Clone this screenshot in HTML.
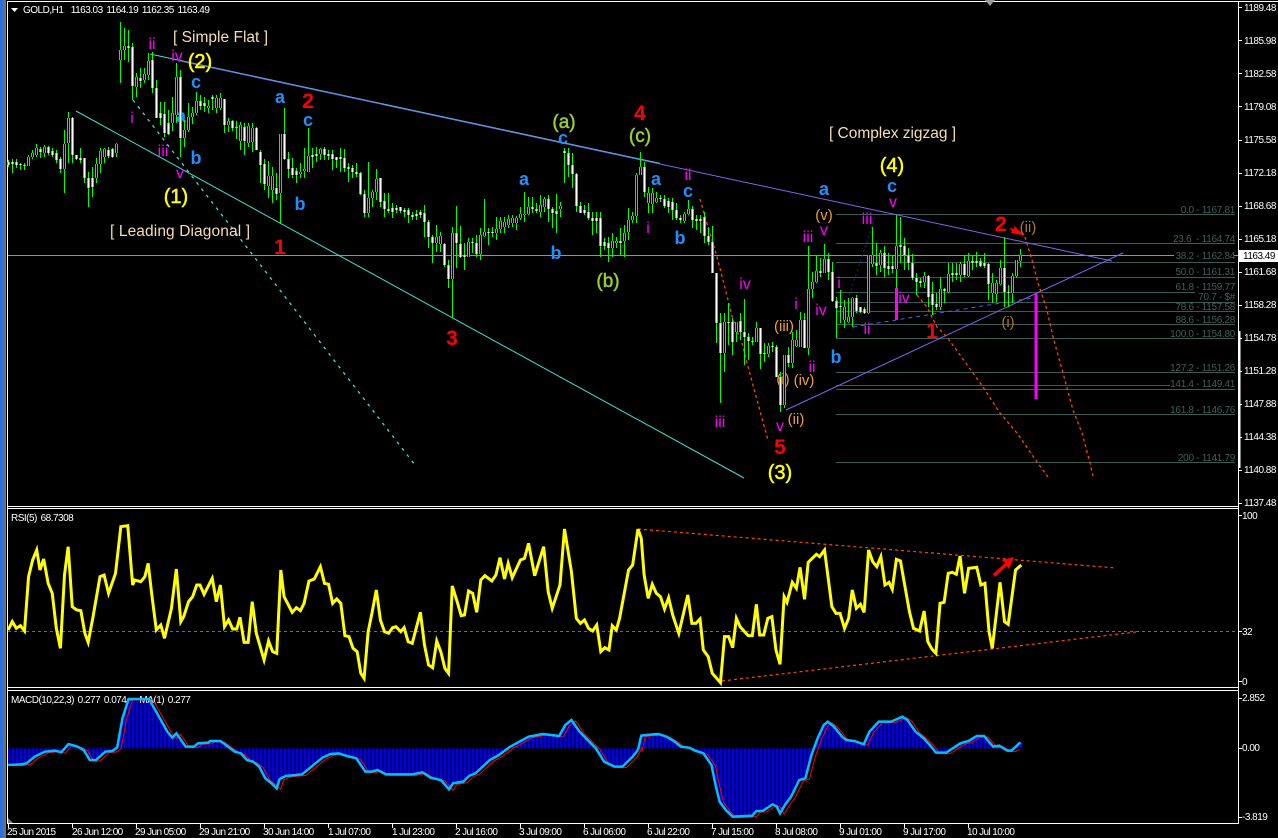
<!DOCTYPE html>
<html><head><meta charset="utf-8"><title>GOLD,H1</title>
<style>
html,body{margin:0;padding:0;background:#000;width:1278px;height:838px;overflow:hidden}
svg{position:absolute;left:0;top:0;display:block}
text{font-family:"Liberation Sans",sans-serif}
.t{fill:#fff;font-size:10px;letter-spacing:-.5px}
.h{fill:#fff;font-size:10px;letter-spacing:-.5px;word-spacing:1.4px}
.ta{fill:#fff;font-size:10px;letter-spacing:-.6px}
.f{fill:#3f5f5a;font-size:10px;text-anchor:end;letter-spacing:-.3px}
.y{fill:#ff0;stroke:#ff0;stroke-width:.5px;font-size:20px;text-anchor:middle}
.b{fill:#1e90ff;font-size:18px;font-weight:bold;text-anchor:middle}
.r{fill:#f00;font-size:21px;font-weight:bold;text-anchor:middle}
.g{fill:#9acd32;stroke:#9acd32;stroke-width:.5px;font-size:19px;text-anchor:middle}
.m{fill:#f0f;font-size:16px;text-anchor:middle}
.o{fill:#f0a030;font-size:15px;text-anchor:middle}
.d{fill:#a87830;font-size:15px;text-anchor:middle}
.w{fill:#f5deb3;font-size:15.5px}
.n{vector-effect:non-scaling-stroke;fill:none}
</style></head><body>
<svg width="1278" height="838" viewBox="0 0 1278 838" xmlns="http://www.w3.org/2000/svg">
<defs>
<pattern id="hp" patternUnits="userSpaceOnUse" x="8" y="0" width="4" height="10"><rect width="2" height="10" fill="#0000e0"/><rect x="2" width="1" height="10" fill="#00007a"/><rect x="3" width="1" height="10" fill="#000"/></pattern>
<clipPath id="hc">
<polygon transform="translate(0,505) scale(.40816,.33333)" points="20,730 20,780 50,778 65,775 85,755 110,740 135,737 150,742 168,717 190,725 205,735 220,765 235,765 258,740 275,738 287,728 300,640 315,582 365,582 385,625 410,680 422,698 432,685 455,725 475,725 485,715 510,713 515,708 540,708 575,740 590,745 605,765 620,770 635,785 650,820 665,835 678,850 685,822 700,813 740,808 770,778 790,758 810,747 830,745 850,753 873,760 895,800 910,800 925,795 945,808 1010,808 1035,802 1055,818 1080,825 1100,853 1110,835 1135,830 1150,812 1165,805 1200,765 1220,752 1250,725 1295,695 1330,687 1370,693 1385,660 1400,645 1420,680 1460,730 1480,770 1505,785 1525,785 1550,755 1563,725 1568,695 1568,730"/>
<polygon transform="translate(638,505) scale(.40816,.33333)" points="0,730 0,735 8,692 20,690 50,687 70,695 90,710 105,725 125,728 140,737 160,745 180,780 190,840 200,890 215,915 232,935 280,932 290,918 305,918 330,898 340,905 348,925 360,900 375,875 395,825 410,820 425,750 440,700 455,660 465,650 480,665 500,695 510,705 530,708 553,718 567,680 590,650 620,650 648,635 660,645 680,680 700,700 715,720 730,743 755,743 790,715 810,708 830,693 848,693 870,725 885,722 905,737 915,737 937,712 942,712 942,730"/>
</clipPath>
<path id="cw" class="n" d="M8.5 162V165M12.5 162V164M16.5 162V165M20.5 164V165M24.5 165V166M40.5 149V152M48.5 147V153M52.5 151V155M56.5 153V160M60.5 159V169M72.5 118V155M76.5 155V159M80.5 158V160M84.5 158V178M88.5 178V188M92.5 178V187M108.5 150V156M112.5 149V157M128.5 46V48M132.5 47V86M140.5 78V81M152.5 60V88M156.5 88V118M160.5 113V118M164.5 114V133M168.5 123V134M180.5 77V138M200.5 101V106M204.5 103V106M212.5 97V99M224.5 99V125M232.5 121V128M236.5 127V128M244.5 127V141M256.5 128V150M260.5 152V165M264.5 164V184M276.5 188V194M284.5 134V159M288.5 159V169M292.5 168V175M296.5 171V175M312.5 155V157M316.5 154V156M324.5 149V155M328.5 154V156M332.5 154V159M336.5 157V160M340.5 157V159M344.5 158V168M348.5 167V169M352.5 168V172M356.5 172V174M360.5 173V194M364.5 194V213M380.5 178V202M384.5 201V209M388.5 209V211M392.5 208V212M396.5 208V210M400.5 207V211M404.5 210V212M408.5 210V215M412.5 215V217M416.5 214V216M420.5 212V215M424.5 213V222M428.5 222V237M432.5 237V243M444.5 244V265M448.5 265V279M456.5 233V243M460.5 244V257M464.5 255V257M472.5 242V243M476.5 243V254M488.5 232V233M492.5 232V233M532.5 207V209M536.5 209V211M548.5 199V209M552.5 209V213M556.5 211V214M564.5 151V153M568.5 153V165M572.5 165V174M576.5 174V206M580.5 206V213M584.5 210V213M588.5 212V218M592.5 218V221M596.5 218V221M600.5 218V246M604.5 242V246M608.5 243V248M620.5 241V243M644.5 167V192M660.5 198V199M664.5 199V206M668.5 201V207M672.5 202V210M676.5 210V218M680.5 218V220M692.5 209V220M696.5 219V221M700.5 219V221M704.5 217V236M708.5 236V242M712.5 242V273M716.5 273V323M720.5 323V353M728.5 322V323M732.5 322V342M740.5 321V332M744.5 332V337M748.5 337V341M752.5 341V342M760.5 328V354M764.5 353V354M772.5 346V347M776.5 347V377M780.5 377V405M788.5 355V363M804.5 320V348M820.5 271V273M828.5 259V272M832.5 272V301M836.5 301V308M840.5 306V307M856.5 298V311M860.5 307V312M864.5 309V313M876.5 263V266M884.5 253V268M888.5 266V269M892.5 266V269M900.5 245V247M904.5 246V255M908.5 255V263M912.5 263V278M916.5 278V282M920.5 281V283M928.5 276V297M932.5 294V305M936.5 304V307M944.5 289V291M952.5 273V275M956.5 273V275M964.5 264V275M972.5 261V263M976.5 261V263M980.5 261V266M984.5 263V266M988.5 264V284M1004.5 268V292M1008.5 292V293"/>
<path id="cu" class="n" d="M28.5 157V166M32.5 153V157M36.5 148V155M44.5 147V153M64.5 144V169M68.5 118V143M96.5 164V178M100.5 151V164M104.5 149V157M116.5 144V153M120.5 50V60M124.5 46V50M136.5 77V87M144.5 74V80M148.5 61V75M172.5 113V123M176.5 77V115M184.5 130V138M188.5 117V130M192.5 113V117M196.5 101V113M208.5 106V108M216.5 98V108M220.5 98V108M228.5 121V125M240.5 125V141M248.5 126V143M252.5 128V142M268.5 176V186M272.5 176V190M280.5 134V193M300.5 172V174M304.5 169V171M308.5 156V172M320.5 149V154M368.5 198V213M372.5 192V198M376.5 179V192M436.5 237V243M440.5 236V244M452.5 233V279M468.5 242V257M480.5 235V254M484.5 232V236M496.5 229V233M500.5 221V229M504.5 222V227M508.5 219V225M512.5 218V223M516.5 218V223M520.5 214V218M524.5 214V215M528.5 207V214M540.5 205V212M544.5 199V207M560.5 206V209M612.5 241V248M616.5 241V243M624.5 233V241M628.5 220V232M632.5 216V220M636.5 175V216M640.5 167V175M648.5 193V203M652.5 193V204M656.5 198V202M684.5 214V221M688.5 209V214M724.5 322V353M736.5 322V332M756.5 328V342M768.5 346V354M784.5 355V405M792.5 340V363M796.5 340V346M800.5 320V347M808.5 289V348M812.5 282V289M816.5 271V282M824.5 259V273M844.5 307V320M848.5 317V322M852.5 298V317M868.5 255V313M872.5 255V264M880.5 253V265M896.5 246V269M924.5 276V282M940.5 289V307M948.5 274V292M960.5 264V275M968.5 261V276M992.5 283V293M996.5 283V294M1000.5 268V284M1012.5 276V293M1016.5 260V276M1020.5 255V261"/>
</defs>

<!-- frame -->
<rect x="0" y="0" width="3" height="838" fill="#2a6fe0"/><rect x="3" y="0" width="3" height="838" fill="#707070"/>
<g shape-rendering="crispEdges" stroke="#fff" fill="none">
<path d="M7 1.5H1278M7.5 1V823M1238.5 1V823M7 506.5H1238M7 508.5H1238M7 687.5H1238M7 690.5H1238M7 823.5H1239"/>
<path d="M1239.5 331V468" stroke-width="2"/>
<path d="M1238 7.5h4M1238 40.5h4M1238 73.5h4M1238 106.5h4M1238 140.5h4M1238 173.5h4M1238 206.5h4M1238 239.5h4M1238 272.5h4M1238 305.5h4M1238 338.5h4M1238 371.5h4M1238 404.5h4M1238 437.5h4M1238 470.5h4M1238 503.5h4M1238 515.5h4M1238 631.5h4M1238 681.5h4M1238 698.5h4M1238 748.5h4M1238 817.5h4"/>
<path d="M8.5 823v5M72.5 823v5M136.5 823v5M200.5 823v5M264.5 823v5M328.5 823v5M392.5 823v5M456.5 823v5M520.5 823v5M584.5 823v5M648.5 823v5M712.5 823v5M776.5 823v5M840.5 823v5M904.5 823v5M968.5 823v5"/>
</g>
<polygon points="985,0 995,0 990,6" fill="#9a9a9a"/>
<polygon points="8,818 8,823 13,823" fill="#808080"/>

<!-- current price and fib lines -->
<path d="M8 255.5H1174" stroke="#8c9494" shape-rendering="crispEdges"/>
<g stroke="#3a5c55" shape-rendering="crispEdges" fill="none">
<path d="M836 214.5H1235M836 243.5H1235M836 262.5H1235M836 277.5H1235M836 292.5H1195M836 302.5H1235M836 311.5H1235M836 324.5H1235M836 338.5H1235M836 372.5H1235M836 385.5H1170M836 389.5H1235M836 414.5H1235M836 462.5H1235"/>
</g>
<g>
<text class="f" x="1235" y="213">0.0 - 1167.81</text>
<text class="f" x="1235" y="242">23.6 &nbsp;- 1164.74</text>
<text class="f" x="1235" y="259">38.2 - 1162.84</text>
<text class="f" x="1235" y="275">50.0 - 1161.31</text>
<text class="f" x="1235" y="290">61.8 - 1159.77</text>
<text class="f" x="1235" y="300">70.7 - $#</text>
<text class="f" x="1235" y="310">78.6 - 1157.58</text>
<text class="f" x="1235" y="323">88.6 - 1156.28</text>
<text class="f" x="1235" y="337">100.0 - 1154.80</text>
<text class="f" x="1235" y="371">127.2 - 1151.26</text>
<text class="f" x="1235" y="387">141.4 - 1149.41</text>
<text class="f" x="1235" y="413">161.8 - 1146.76</text>
<text class="f" x="1235" y="461">200 - 1141.79</text>
</g>

<!-- trend lines -->
<g fill="none" stroke-width="1">
<path d="M150 54L660 163.4" stroke="#40e0d0"/>
<path d="M178 60.5L1112 261" stroke="#7b68ee"/>
<path d="M76 111L744 478" stroke="#40e0d0"/>
<path d="M133 100L415 465" stroke="#40e0d0" stroke-width="1.3" stroke-dasharray="3 5"/>
<path d="M786 410L1123 253" stroke="#7b68ee"/>
<path d="M853 327L1038 297" stroke="#4169e1" stroke-dasharray="4 4"/>
<path d="M837 333L875 217" stroke="#24247a" stroke-dasharray="2 3"/>
<g stroke="#ff4500" stroke-width="1.3" stroke-dasharray="3 3">
<path d="M700 199L705 217L712 240L717 257L723 280L728 300L733 320L742 343L747 363L757 400L768 440"/>
<path d="M917 295L927 307L937 327L947 337L960 355L973 373L983 387L1000 413L1017 433L1037 462L1048 477"/>
<path d="M1025 237L1032 260L1038 283L1047 310L1053 337L1063 373L1073 410L1082 433L1090 463L1093 476"/>
</g>
</g>
<rect x="895" y="288" width="3" height="32" fill="#f0f"/>
<rect x="1034.5" y="293" width="3" height="106" fill="#f0f"/>
<polygon points="1009,228 1014,229 1014,226 1025,235.5 1011,233 1012,231" fill="#f00"/>

<!-- labels -->
<g>
<text class="w" x="173" y="42" textLength="95">[ Simple Flat ]</text>
<text class="w" x="110" y="236" textLength="140">[ Leading Diagonal ]</text>
<text class="w" x="829" y="138" textLength="127">[ Complex zigzag ]</text>
<text class="y" x="200" y="68">(2)</text><text class="y" x="176" y="203">(1)</text><text class="y" x="780" y="479">(3)</text><text class="y" x="892" y="172">(4)</text>
<text class="b" x="196" y="88">c</text><text class="b" x="181" y="122">a</text><text class="b" x="196" y="164">b</text><text class="b" x="280" y="103">a</text><text class="b" x="308" y="126">c</text><text class="b" x="300" y="210">b</text><text class="b" x="563" y="144">c</text><text class="b" x="524" y="185">a</text><text class="b" x="556" y="259">b</text><text class="b" x="656" y="185">a</text><text class="b" x="688" y="197">c</text><text class="b" x="680" y="244">b</text><text class="b" x="824" y="195">a</text><text class="b" x="836" y="363">b</text><text class="b" x="892" y="192">c</text>
<text class="r" x="308" y="108">2</text><text class="r" x="280" y="254">1</text><text class="r" x="452" y="345">3</text><text class="r" x="640" y="120">4</text><text class="r" x="780" y="454">5</text><text class="r" x="1001" y="231">2</text><text class="r" x="932" y="338">1</text>
<text class="g" x="564" y="128">(a)</text><text class="g" x="640" y="142">(c)</text><text class="g" x="608" y="287">(b)</text>
<g transform="translate(0,1)">
<text class="m" x="152" y="48">ii</text><text class="m" x="177" y="60">iv</text><text class="m" x="132" y="122">i</text><text class="m" x="163" y="155">iii</text><text class="m" x="180" y="177">v</text><text class="m" x="720" y="426">iii</text><text class="m" x="745" y="288">iv</text><text class="m" x="688" y="179">ii</text><text class="m" x="648" y="232">i</text><text class="m" x="796" y="308">i</text><text class="m" x="808" y="241">iii</text><text class="m" x="821" y="314">iv</text><text class="m" x="824" y="234">v</text><text class="m" x="812" y="371">ii</text><text class="m" x="780" y="430">v</text><text class="m" x="839" y="287">i</text><text class="m" x="867" y="223">iii</text><text class="m" x="893" y="206">v</text><text class="m" x="867" y="333">ii</text><text class="m" x="904" y="302">iv</text>
</g>
<text class="o" x="824" y="220">(v)</text><text class="o" x="784" y="331">(iii)</text><text class="o" x="804" y="385">(iv)</text><text class="o" x="796" y="424">(ii)</text><text class="o" x="783" y="384">(i)</text><text class="d" x="1028" y="232">(ii)</text><text class="d" x="1008" y="327">(i)</text>
</g>

<!-- candles -->
<g shape-rendering="crispEdges" fill="none">
<path stroke="#0f0" d="M8.5 160V167M12.5 159V173M16.5 159V168M20.5 163V170M24.5 163V170M28.5 155V166M32.5 150V159M36.5 144V157M40.5 147V158M44.5 145V157M48.5 146V155M52.5 148V157M56.5 150V163M60.5 157V173M64.5 130V193M68.5 112V163M72.5 117V163M76.5 155V160M80.5 148V163M84.5 158V183M88.5 172V207M92.5 167V197M96.5 158V183M100.5 148V173M104.5 148V163M108.5 147V158M112.5 148V158M116.5 143V157M120.5 22V83M124.5 28V60M128.5 30V62M132.5 43V100M136.5 73V97M140.5 68V88M144.5 68V83M148.5 53V80M152.5 52V93M156.5 80V117M160.5 102V125M164.5 102V137M168.5 110V135M172.5 97V131M176.5 63V123M180.5 70V157M184.5 120V147M188.5 103V132M192.5 107V124M196.5 92V115M200.5 95V110M204.5 97V112M208.5 100V113M212.5 95V110M216.5 95V113M220.5 93V110M224.5 99V133M228.5 118V132M232.5 120V131M236.5 121V139M240.5 122V150M244.5 123V155M248.5 123V147M252.5 123V152M256.5 127V150M260.5 150V183M264.5 159V190M268.5 161V198M272.5 167V203M276.5 173V200M280.5 134V223M284.5 108V160M288.5 152V178M292.5 158V178M296.5 168V183M300.5 163V178M304.5 148V178M308.5 128V172M312.5 148V168M316.5 147V162M320.5 148V160M324.5 147V160M328.5 150V160M332.5 150V170M336.5 157V168M340.5 148V172M344.5 149V172M348.5 163V182M352.5 165V178M356.5 163V177M360.5 172V195M364.5 190V217M368.5 162V217M372.5 190V207M376.5 169V200M380.5 178V207M384.5 193V217M388.5 193V213M392.5 203V218M396.5 205V213M400.5 207V213M404.5 208V217M408.5 208V223M412.5 212V220M416.5 210V220M420.5 210V218M424.5 205V237M428.5 220V248M432.5 235V263M436.5 225V252M440.5 232V252M444.5 243V267M448.5 260V288M452.5 227V318M456.5 206V268M460.5 226V258M464.5 243V270M468.5 238V257M472.5 238V253M476.5 235V257M480.5 228V260M484.5 199V237M488.5 228V245M492.5 227V237M496.5 217V240M500.5 217V233M504.5 217V233M508.5 215V228M512.5 215V227M516.5 216V230M520.5 207V220M524.5 192V222M528.5 197V215M532.5 197V213M536.5 203V213M540.5 195V217M544.5 197V212M548.5 195V222M552.5 207V228M556.5 194V233M560.5 202V217M564.5 148V183M568.5 148V177M572.5 153V188M576.5 173V212M580.5 202V213M584.5 205V215M588.5 203V220M592.5 212V235M596.5 212V233M600.5 212V257M604.5 238V250M608.5 237V262M612.5 233V257M616.5 237V248M620.5 228V255M624.5 225V257M628.5 208V240M632.5 212V223M636.5 173V223M640.5 152V175M644.5 162V197M648.5 187V213M652.5 188V213M656.5 192V203M660.5 195V202M664.5 195V208M668.5 198V213M672.5 198V220M676.5 203V220M680.5 215V223M684.5 212V223M688.5 200V215M692.5 206V228M696.5 215V230M700.5 215V233M704.5 212V243M708.5 227V245M712.5 226V273M716.5 273V343M720.5 313V403M724.5 313V372M728.5 303V345M732.5 318V355M736.5 322V342M740.5 313V340M744.5 299V365M748.5 333V360M752.5 337V345M756.5 322V342M760.5 328V369M764.5 343V362M768.5 343V357M772.5 342V352M776.5 345V377M780.5 372V412M784.5 355V408M788.5 347V367M792.5 332V368M796.5 330V347M800.5 312V347M804.5 313V348M808.5 246V355M812.5 272V298M816.5 256V283M820.5 258V277M824.5 244V273M828.5 253V280M832.5 262V302M836.5 297V338M840.5 290V323M844.5 300V328M848.5 298V323M852.5 297V327M856.5 295V313M860.5 307V313M864.5 307V314M868.5 255V314M872.5 227V267M876.5 243V275M880.5 250V272M884.5 246V277M888.5 253V275M892.5 255V273M896.5 215V288M900.5 217V263M904.5 238V270M908.5 248V270M912.5 254V280M916.5 273V295M920.5 278V287M924.5 272V288M928.5 275V307M932.5 282V315M936.5 293V310M940.5 277V310M944.5 288V303M948.5 263V293M952.5 263V282M956.5 263V280M960.5 262V282M964.5 255V277M968.5 253V277M972.5 255V270M976.5 252V267M980.5 258V267M984.5 253V268M988.5 263V300M992.5 273V303M996.5 280V302M1000.5 260V285M1004.5 237V307M1008.5 285V307M1012.5 273V303M1016.5 260V278M1020.5 249V267"/>
<g stroke="#0f0" stroke-width="3"><use href="#cw"/><use href="#cu"/></g>
<g stroke-width="1"><use href="#cw" stroke="#fff"/><use href="#cu" stroke="#000"/></g>
</g>

<!-- axis labels -->
<rect x="1239" y="250" width="39" height="12" fill="#fff"/>
<path d="M1234 255.5h4" stroke="#8c9494"/>
<g>
<text class="t" x="1244" y="11">1189.48</text><text class="t" x="1244" y="44">1185.98</text><text class="t" x="1244" y="77">1182.58</text><text class="t" x="1244" y="110">1179.08</text><text class="t" x="1244" y="143">1175.58</text><text class="t" x="1244" y="176">1172.18</text><text class="t" x="1244" y="209">1168.68</text><text class="t" x="1244" y="242">1165.18</text><text class="t" x="1244" y="275">1161.68</text><text class="t" x="1244" y="308">1158.28</text><text class="t" x="1244" y="341">1154.78</text><text class="t" x="1244" y="374">1151.28</text><text class="t" x="1244" y="407">1147.88</text><text class="t" x="1244" y="440">1144.38</text><text class="t" x="1244" y="473">1140.88</text><text class="t" x="1244" y="506">1137.48</text>
<text class="t" x="1243" y="259" style="fill:#000">1163.49</text>
<text class="t" x="1242" y="519">100</text><text class="t" x="1242" y="635">32</text><text class="t" x="1242" y="685">0</text>
<text class="t" x="1242" y="701">2.852</text><text class="t" x="1242" y="751">0.00</text><text class="t" x="1242" y="820">-3.819</text>
<text class="ta" x="7" y="835">25 Jun 2015</text><text class="ta" x="72" y="835">26 Jun 12:00</text><text class="ta" x="135" y="835">29 Jun 05:00</text><text class="ta" x="199" y="835">29 Jun 21:00</text><text class="ta" x="263" y="835">30 Jun 14:00</text><text class="ta" x="328" y="835">1 Jul 07:00</text><text class="ta" x="392" y="835">1 Jul 23:00</text><text class="ta" x="455" y="835">2 Jul 16:00</text><text class="ta" x="519" y="835">3 Jul 09:00</text><text class="ta" x="583" y="835">6 Jul 06:00</text><text class="ta" x="647" y="835">6 Jul 22:00</text><text class="ta" x="711" y="835">7 Jul 15:00</text><text class="ta" x="775" y="835">8 Jul 08:00</text><text class="ta" x="839" y="835">9 Jul 01:00</text><text class="ta" x="903" y="835">9 Jul 17:00</text><text class="ta" x="967" y="835">10 Jul 10:00</text>
</g>
<polygon points="11,8 18,8 14.5,12" fill="#fff"/>
<text class="h" x="23" y="13">GOLD,H1 &nbsp;1163.03 1164.19 1162.35 1163.49</text>

<!-- RSI -->
<text class="h" x="11" y="521">RSI(5) 68.7308</text>
<path d="M8 631.5H1238" stroke="#4169e1" stroke-dasharray="3 3" shape-rendering="crispEdges"/>
<g fill="none" stroke="#ff4500" stroke-width="1.2" stroke-dasharray="3 3">
<path d="M638 529L1116 568"/><path d="M722 681L1136 632"/>
</g>
<g transform="translate(0,505) scale(.40816,.33333)">
<polyline class="n" stroke="#ff0" stroke-width="3" points="20,375 30,350 40,370 50,362 60,378 70,215 80,165 90,135 98,195 107,162 118,235 128,265 138,370 148,430 158,210 167,125 177,305 188,315 198,317 208,385 216,412 228,335 245,215 255,210 266,265 283,205 296,65 313,62 325,240 330,225 345,230 355,215 363,175 372,270 383,375 394,360 403,400 420,310 432,192 443,350 450,335 462,290 472,275 482,240 490,240 500,268 520,220 530,290 540,240 550,365 560,345 570,372 580,372 588,337 598,412 608,412 618,290 628,385 647,465 658,408 668,440 678,445 688,195 696,275 716,322 726,308 736,317 745,295 757,228 770,222 785,185 795,235 805,238 815,295 825,282 835,295 845,392 855,395 865,430 875,440 884,505 892,520 902,380 912,320 922,255 932,345 942,380 952,385 962,368 970,365 982,380 990,368 1000,410 1010,415 1030,322 1040,420 1050,480 1060,488 1070,408 1080,440 1090,490 1099,505 1108,243 1120,290 1130,332 1138,330 1148,258 1158,265 1168,322 1178,225 1188,212 1205,228 1215,210 1225,158 1236,222 1245,175 1255,218 1275,165 1285,160 1295,115 1310,212 1332,125 1343,260 1353,310 1372,240 1383,72 1400,200 1412,340 1422,355 1432,345 1442,370 1452,378 1462,360 1472,440 1482,428 1492,435 1500,362 1510,375 1518,340 1540,195 1550,180 1563,72"/>
</g>
<g transform="translate(638,505) scale(.40816,.33333)">
<polyline class="n" stroke="#ff0" stroke-width="3" points="0,72 8,100 15,210 25,280 35,238 45,265 55,275 65,312 75,278 85,330 100,385 122,270 132,355 142,355 152,342 160,435 172,455 182,505 202,533 212,395 222,395 232,428 241,340 250,365 270,392 280,392 290,298 298,390 308,390 318,340 328,335 338,435 348,478 358,275 365,292 378,232 388,250 397,187 408,283 417,172 437,148 445,155 457,135 475,305 485,325 495,325 506,370 516,340 525,255 535,310 545,298 554,322 565,135 575,170 585,185 595,155 605,240 615,232 623,253 633,163 643,168 665,320 675,370 690,378 701,318 710,410 720,432 730,445 740,295 750,292 760,205 770,202 780,208 789,153 800,265 810,190 830,187 840,240 850,235 860,380 868,430 887,232 898,350 907,358 925,195 939,180"/>
</g>
<polygon points="993,574 1005,563 1002,560 1014,557 1009,569 1007,566 995,577" fill="#f00"/>

<!-- MACD -->
<rect x="8" y="690" width="1016" height="133" fill="url(#hp)" clip-path="url(#hc)"/>
<text class="h" x="11" y="703">MACD(10,22,3) 0.277 0.074 -- MA(1) 0.277</text>
<g transform="translate(4,506) scale(.40816,.33333)">
<polyline class="n" stroke="#f00" stroke-width="1" points="20,780 50,778 65,775 85,755 110,740 135,737 150,742 168,717 190,725 205,735 220,765 235,765 258,740 275,738 287,728 300,640 315,582 365,582 385,625 410,680 422,698 432,685 455,725 475,725 485,715 510,713 515,708 540,708 575,740 590,745 605,765 620,770 635,785 650,820 665,835 678,850 685,822 700,813 740,808 770,778 790,758 810,747 830,745 850,753 873,760 895,800 910,800 925,795 945,808 1010,808 1035,802 1055,818 1080,825 1100,853 1110,835 1135,830 1150,812 1165,805 1200,765 1220,752 1250,725 1295,695 1330,687 1370,693 1385,660 1400,645 1420,680 1460,730 1480,770 1505,785 1525,785 1550,755 1563,725"/>
</g>
<g transform="translate(642,506) scale(.40816,.33333)">
<polyline class="n" stroke="#f00" stroke-width="1" points="0,735 8,692 20,690 50,687 70,695 90,710 105,725 125,728 140,737 160,745 180,780 190,840 200,890 215,915 232,935 280,932 290,918 305,918 330,898 340,905 348,925 360,900 375,875 395,825 410,820 425,750 440,700 455,660 465,650 480,665 500,695 510,705 530,708 553,718 567,680 590,650 620,650 648,635 660,645 680,680 700,700 715,720 730,743 755,743 790,715 810,708 830,693 848,693 870,725 885,722 905,737 915,737 925,730"/>
</g>
<g transform="translate(0,505) scale(.40816,.33333)">
<polyline class="n" stroke="#00bfff" stroke-width="2.5" points="20,780 50,778 65,775 85,755 110,740 135,737 150,742 168,717 190,725 205,735 220,765 235,765 258,740 275,738 287,728 300,640 315,582 365,582 385,625 410,680 422,698 432,685 455,725 475,725 485,715 510,713 515,708 540,708 575,740 590,745 605,765 620,770 635,785 650,820 665,835 678,850 685,822 700,813 740,808 770,778 790,758 810,747 830,745 850,753 873,760 895,800 910,800 925,795 945,808 1010,808 1035,802 1055,818 1080,825 1100,853 1110,835 1135,830 1150,812 1165,805 1200,765 1220,752 1250,725 1295,695 1330,687 1370,693 1385,660 1400,645 1420,680 1460,730 1480,770 1505,785 1525,785 1550,755 1563,735"/>
</g>
<g transform="translate(638,505) scale(.40816,.33333)">
<polyline class="n" stroke="#00bfff" stroke-width="2.5" points="0,735 8,692 20,690 50,687 70,695 90,710 105,725 125,728 140,737 160,745 180,780 190,840 200,890 215,915 232,935 280,932 290,918 305,918 330,898 340,905 348,925 360,900 375,875 395,825 410,820 425,750 440,700 455,660 465,650 480,665 500,695 510,705 530,708 553,718 567,680 590,650 620,650 648,635 660,645 680,680 700,700 715,720 730,743 755,743 790,715 810,708 830,693 848,693 870,725 885,722 905,737 915,737 937,712"/>
</g>
</svg>
</body></html>
